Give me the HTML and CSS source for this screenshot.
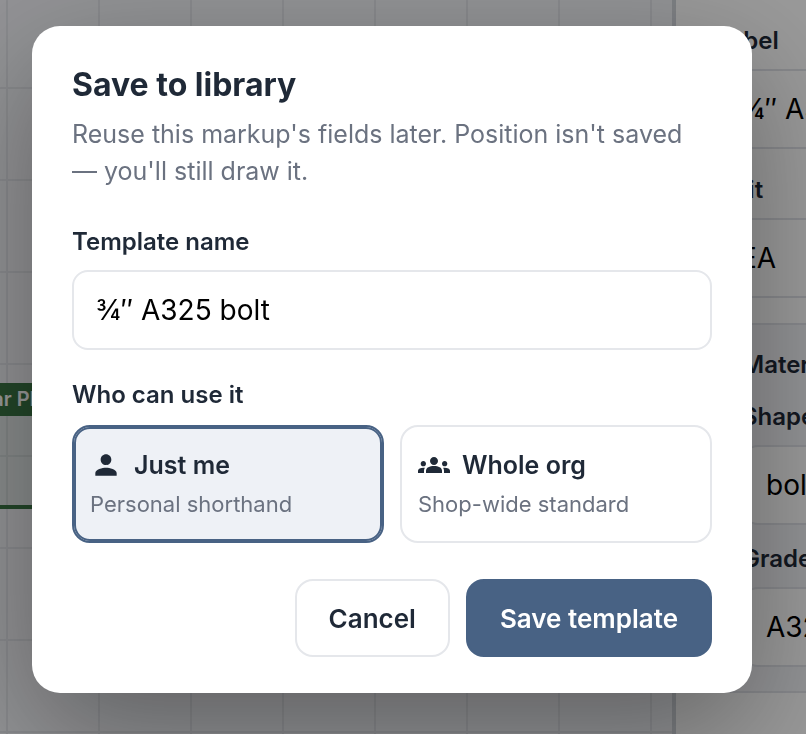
FILE: index.html
```
<!DOCTYPE html>
<html lang="en">
<head>
    <meta charset="UTF-8">
    <meta name="viewport" content="width=device-width, initial-scale=1.0">
    <title>Save to library</title>
    <link rel="stylesheet" href="styles.css">
</head>
<body>
    <div class="workspace">
        <main class="canvas">
            <div class="markup">
                <span class="markup-tag">Shear Plate</span>
            </div>
        </main>

        <aside class="panel">
            <label for="field-label">Label</label>
            <input type="text" id="field-label" value="¾″ A325 bolt">
            <label for="field-unit">Unit</label>
            <input type="text" id="field-unit" value="EA">

            <section class="material">
                <h3>Material</h3>
                <label for="field-shape">Shape</label>
                <input type="text" id="field-shape" value="bolt">
                <label for="field-grade">Grade</label>
                <input type="text" id="field-grade" value="A325">
            </section>
        </aside>
    </div>

    <div class="overlay">
        <form class="dialog" role="dialog" aria-labelledby="dialog-title">
            <h1 id="dialog-title">Save to library</h1>
            <p class="description">Reuse this markup's fields later. Position isn't saved — you'll still draw it.</p>

            <label class="field-label" for="template-name">Template name</label>
            <input type="text" class="text-input" id="template-name" value="¾″ A325 bolt">

            <fieldset>
                <legend class="field-label">Who can use it</legend>
                <div class="options">
                    <label class="option">
                        <input type="radio" name="scope" value="me" checked>
                        <span class="option-title">
                            <svg class="icon" viewBox="0 0 24 24" aria-hidden="true">
                                <path d="M12 12c2.21 0 4-1.79 4-4s-1.79-4-4-4-4 1.79-4 4 1.79 4 4 4zm0 2c-2.67 0-8 1.34-8 4v2h16v-2c0-2.66-5.33-4-8-4z"/>
                            </svg>
                            Just me
                        </span>
                        <span class="option-hint">Personal shorthand</span>
                    </label>
                    <label class="option">
                        <input type="radio" name="scope" value="org">
                        <span class="option-title">
                            <svg class="icon" viewBox="0 0 24 24" aria-hidden="true">
                                <path d="M12 12.75c1.63 0 3.07.39 4.24.9 1.08.48 1.76 1.56 1.76 2.73V18H6v-1.61c0-1.18.68-2.26 1.76-2.73 1.17-.52 2.61-.91 4.24-.91zM4 13c1.1 0 2-.9 2-2s-.9-2-2-2-2 .9-2 2 .9 2 2 2zm1.13 1.1c-.37-.06-.74-.1-1.13-.1-.99 0-1.93.21-2.78.58C.48 14.9 0 15.62 0 16.43V18h4.5v-1.61c0-.83.23-1.61.63-2.29zM20 13c1.1 0 2-.9 2-2s-.9-2-2-2-2 .9-2 2 .9 2 2 2zm4 3.43c0-.81-.48-1.53-1.22-1.85-.85-.37-1.79-.58-2.78-.58-.39 0-.76.04-1.13.1.4.68.63 1.46.63 2.29V18H24v-1.57zM12 6c1.66 0 3 1.34 3 3s-1.34 3-3 3-3-1.34-3-3 1.34-3 3-3z"/>
                            </svg>
                            Whole org
                        </span>
                        <span class="option-hint">Shop-wide standard</span>
                    </label>
                </div>
            </fieldset>

            <div class="actions">
                <button type="button" class="btn">Cancel</button>
                <button type="submit" class="btn btn-primary">Save template</button>
            </div>
        </form>
    </div>
</body>
</html>
```
FILE: styles.css
```
* {
    box-sizing: border-box;
}
body {
    margin: 0;
    font-family: Inter, sans-serif;
    color: #1f2937;
}
input, button {
    font-family: inherit;
}

/* Page behind the dialog */
.workspace {
    display: grid;
    grid-template-columns: minmax(0, 1fr) 134px;
    height: 100vh;
    overflow: hidden;
}
.canvas {
    position: relative;
    overflow: hidden;
    background-color: #f3f4f8;
    background-image:
        linear-gradient(#e3e5ea 2px, transparent 2px),
        linear-gradient(90deg, #e3e5ea 2px, transparent 2px);
    background-size: 92px 92px;
    background-position: 6px 87px;
}
.markup {
    position: absolute;
    top: 383px;
    left: -53px;
    width: 400px;
    height: 126px;
    border-bottom: 4px solid #3a7544;
    background-color: rgba(47, 111, 62, 0.08);
}
.markup-tag {
    display: inline-block;
    padding: 0 8px;
    background-color: #3a7544;
    color: #fff;
    font-size: 20px;
    font-weight: 600;
    line-height: 33px;
}
.panel {
    padding: 25px 0 0 40px;
    border-left: 4px solid #d1d5db;
    background-color: #fff;
    overflow: hidden;
}
.panel label, .panel h3 {
    display: block;
    margin: 0;
    font-size: 24px;
    font-weight: 600;
    line-height: 32px;
    white-space: nowrap;
}
.panel input {
    display: block;
    width: 320px;
    height: 80px;
    margin: 12px 0 25px;
    padding: 0 22px;
    border: 2px solid #e1e3e9;
    border-radius: 16px;
    background-color: #fff;
    color: #000;
    font-size: 28px;
}
.material {
    width: 372px;
    padding: 24px;
    border: 2px solid #e1e3e9;
    border-radius: 16px;
    background-color: #f3f4f8;
}
.material h3 {
    margin-bottom: 20px;
}
.material input {
    margin-bottom: 18px;
}
.material input:last-child {
    margin-bottom: 0;
}

/* Dialog */
.overlay {
    position: fixed;
    inset: 0;
    padding: 26px 54px 0 32px;
    background-color: rgba(0, 0, 0, 0.4);
}
.dialog {
    padding: 40px 40px 36px;
    border-radius: 28px;
    background-color: #fff;
    box-shadow: 0 40px 120px rgba(0, 0, 0, 0.35);
}
h1 {
    margin: 0 0 12px;
    font-size: 32px;
    font-weight: 700;
    line-height: 38px;
}
.description {
    margin: 0 0 36px;
    color: #6b7280;
    font-size: 25px;
    line-height: 37px;
}
.field-label {
    display: block;
    margin-bottom: 13px;
    padding: 0;
    font-size: 24px;
    font-weight: 600;
    line-height: 31px;
}
.text-input {
    display: block;
    width: 100%;
    height: 80px;
    margin-bottom: 29px;
    padding: 0 22px;
    border: 2px solid #e5e7eb;
    border-radius: 16px;
    color: #000;
    font-size: 28px;
}
fieldset {
    margin: 0 0 36px;
    padding: 0;
    border: none;
}
fieldset .field-label {
    margin-bottom: 15px;
}
.options {
    display: grid;
    grid-template-columns: 1fr 1fr;
    gap: 16px;
}
.option {
    position: relative;
    display: flex;
    flex-direction: column;
    gap: 7px;
    padding: 22px 16px 21px;
    border: 2px solid #e5e7eb;
    border-radius: 18px;
    cursor: pointer;
}
.option:has(input:checked) {
    border-color: #486284;
    background-color: #eef1f6;
    box-shadow: inset 0 0 0 2px #486284;
}
.option input {
    position: absolute;
    opacity: 0;
}
.option-title {
    display: flex;
    align-items: center;
    gap: 12px;
    font-size: 25px;
    font-weight: 600;
    line-height: 32px;
}
.option-hint {
    color: #6b7280;
    font-size: 22px;
    line-height: 32px;
}
.icon {
    width: 32px;
    height: 32px;
    fill: currentColor;
}
.actions {
    display: flex;
    justify-content: flex-end;
    gap: 16px;
}
.btn {
    height: 78px;
    padding: 0 32px;
    border: 2px solid #e5e7eb;
    border-radius: 18px;
    background-color: #fff;
    color: #1f2937;
    font-size: 26px;
    font-weight: 600;
    cursor: pointer;
}
.btn-primary {
    border-color: #486284;
    background-color: #486284;
    color: #fff;
}
```
